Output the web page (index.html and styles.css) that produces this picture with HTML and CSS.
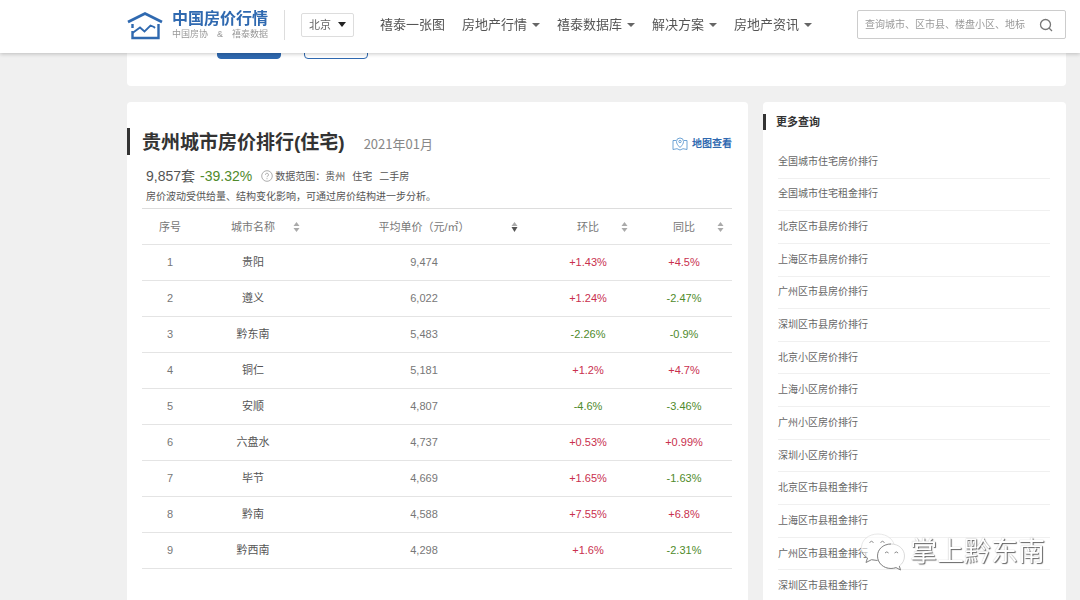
FILE: index.html
```html
<!DOCTYPE html>
<html lang="zh-CN">
<head>
<meta charset="utf-8">
<meta name="viewport" content="width=device-width, initial-scale=1">
<title>贵州城市房价排行(住宅)</title>
<link rel="stylesheet" href="styles.css">
</head>
<body>
<header class="topbar">
  <a class="brand" href="#">
    <svg class="brand-mark" viewBox="0 0 36 30" width="36" height="30" fill="none" stroke="#2f69b0">
      <path d="M1 12 18 3.500 35 12" stroke-width="2.800"/>
      <path d="M5.500 14v4M5.500 21v7H31.500V14" stroke-width="2.400"/>
      <path d="M5.500 23 13 17.500 17.500 21.500 23.500 15.500 27 17 28 18" stroke-width="1.800"/>
    </svg>
    <span class="brand-text">
      <strong class="brand-name">中国房价行情</strong>
      <span class="brand-sub"><span>中国房协</span><span>&amp;</span><span>禧泰数据</span></span>
    </span>
  </a>
  <div class="city">
    <select class="city-select" aria-label="城市"><option>北京</option></select>
    <svg class="city-caret" viewBox="0 0 8 5" width="8" height="5"><path d="M0 0h8L4 5z" fill="#222"/></svg>
  </div>
  <nav class="nav">
    <a href="#">禧泰一张图</a>
    <a class="has-menu" href="#">房地产行情</a>
    <a class="has-menu" href="#">禧泰数据库</a>
    <a class="has-menu" href="#">解决方案</a>
    <a class="has-menu" href="#">房地产资讯</a>
  </nav>
  <form class="search">
    <input class="search-input" type="text" aria-label="搜索" placeholder="查询城市、区市县、楼盘小区、地标">
    <button class="search-button" type="button" aria-label="搜索">
      <svg viewBox="0 0 14 14" width="14" height="14" fill="none" stroke="#777" stroke-width="1.300"><circle cx="6.500" cy="6.500" r="5"/><path d="M10 10l3 3"/></svg>
    </button>
  </form>
</header>

<main class="page">
  <section class="card filters">
    <button class="filter-button primary" type="button" aria-label="查询"></button>
    <button class="filter-button" type="button" aria-label="重置"></button>
  </section>

  <div class="columns">
    <section class="card ranking">
      <div class="ranking-head">
        <h1 class="ranking-title">贵州城市房价排行(住宅)</h1>
        <span class="ranking-date">2021年01月</span>
        <a class="map-link" href="#">
          <svg viewBox="0 0 16 14" width="16" height="14" fill="none" stroke="#5f9ad0" stroke-width=".9"><path d="M4 3.500H1v9l4-.800 3 1.300 3-1.300 4 .800v-9h-3"/><path d="M8 10.500C5.500 8 4.500 6.500 4.500 4.500a3.500 3.500 0 0 1 7 0C11.500 6.500 10.500 8 8 10.500z"/><circle cx="8" cy="4.500" r="1.200"/></svg>
          <span>地图查看</span>
        </a>
      </div>
      <div class="summary">
        <span class="count">9,857套</span>
        <span class="change">-39.32%</span>
        <svg class="help" viewBox="0 0 12 12" width="12" height="12" fill="none" stroke="#999" stroke-width=".8"><circle cx="6" cy="6" r="5.300"/><path d="M4.500 4.800a1.500 1.500 0 1 1 2.300 1.200Q6 6.400 6 7.200M6 8.200v1"/></svg>
        <span class="scope">数据范围：</span>
        <span class="scope-item">贵州</span>
        <span class="scope-item">住宅</span>
        <span class="scope-item">二手房</span>
      </div>
      <p class="note">房价波动受供给量、结构变化影响，可通过房价结构进一步分析。</p>
      <table class="table">
        <colgroup><col class="c-no"><col class="c-name"><col class="c-price"><col class="c-rate"><col class="c-rate"></colgroup>
        <thead>
          <tr>
            <th>序号</th>
            <th><button class="sort" type="button"><span>城市名称</span><svg viewBox="0 0 7 10" width="7" height="10"><path d="M3.500 0 6.500 4H.500z" fill="#aaa"/><path d="M3.500 10 .500 6h6z" fill="#aaa"/></svg></button></th>
            <th><button class="sort wide" type="button"><span>平均单价（元/㎡）</span><svg viewBox="0 0 7 10" width="7" height="10"><path d="M3.500 0 6.500 4H.500z" fill="#aaa"/><path d="M3.500 10 .500 5h6z" fill="#555"/></svg></button></th>
            <th><button class="sort" type="button"><span>环比</span><svg viewBox="0 0 7 10" width="7" height="10"><path d="M3.500 0 6.500 4H.500z" fill="#aaa"/><path d="M3.500 10 .500 6h6z" fill="#aaa"/></svg></button></th>
            <th><button class="sort" type="button"><span>同比</span><svg viewBox="0 0 7 10" width="7" height="10"><path d="M3.500 0 6.500 4H.500z" fill="#aaa"/><path d="M3.500 10 .500 6h6z" fill="#aaa"/></svg></button></th>
          </tr>
        </thead>
        <tbody>
          <tr><td>1</td><td class="name">贵阳</td><td>9,474</td><td class="up">+1.43%</td><td class="up">+4.5%</td></tr>
          <tr><td>2</td><td class="name">遵义</td><td>6,022</td><td class="up">+1.24%</td><td class="down">-2.47%</td></tr>
          <tr><td>3</td><td class="name">黔东南</td><td>5,483</td><td class="down">-2.26%</td><td class="down">-0.9%</td></tr>
          <tr><td>4</td><td class="name">铜仁</td><td>5,181</td><td class="up">+1.2%</td><td class="up">+4.7%</td></tr>
          <tr><td>5</td><td class="name">安顺</td><td>4,807</td><td class="down">-4.6%</td><td class="down">-3.46%</td></tr>
          <tr><td>6</td><td class="name">六盘水</td><td>4,737</td><td class="up">+0.53%</td><td class="up">+0.99%</td></tr>
          <tr><td>7</td><td class="name">毕节</td><td>4,669</td><td class="up">+1.65%</td><td class="down">-1.63%</td></tr>
          <tr><td>8</td><td class="name">黔南</td><td>4,588</td><td class="up">+7.55%</td><td class="up">+6.8%</td></tr>
          <tr><td>9</td><td class="name">黔西南</td><td>4,298</td><td class="up">+1.6%</td><td class="down">-2.31%</td></tr>
        </tbody>
      </table>
    </section>

    <aside class="card more">
      <h2 class="more-title">更多查询</h2>
      <ul class="more-list">
        <li><a href="#">全国城市住宅房价排行</a></li>
        <li><a href="#">全国城市住宅租金排行</a></li>
        <li><a href="#">北京区市县房价排行</a></li>
        <li><a href="#">上海区市县房价排行</a></li>
        <li><a href="#">广州区市县房价排行</a></li>
        <li><a href="#">深圳区市县房价排行</a></li>
        <li><a href="#">北京小区房价排行</a></li>
        <li><a href="#">上海小区房价排行</a></li>
        <li><a href="#">广州小区房价排行</a></li>
        <li><a href="#">深圳小区房价排行</a></li>
        <li><a href="#">北京区市县租金排行</a></li>
        <li><a href="#">上海区市县租金排行</a></li>
        <li><a href="#">广州区市县租金排行</a></li>
        <li><a href="#">深圳区市县租金排行</a></li>
      </ul>
    </aside>
  </div>
</main>

<div class="watermark">
  <svg viewBox="0 0 46 38" width="46" height="38">
    <g fill="#fff" stroke-linejoin="round">
      <path d="M18 1C8.500 1 1.500 7 1.500 14.500c0 4.500 2.300 8 6 10.500L6 29.500l5.500-2.800c2 .600 4.300.800 6.500.800 9.500 0 16.500-5.500 16.500-13S27.500 1 18 1z" fill-opacity=".6" stroke="#ddd" stroke-width=".7"/>
      <path d="M2 19c1 2.700 3 4.500 5.500 6L6 29.500l5.500-2.800 6 .800" fill="none" stroke="#888"/>
      <path d="M31 11c-7.500 0-13.500 5-13.500 12S23.500 35.500 31 35.500c1.800 0 3.500-.300 5-.900l4.500 2.400-1.200-4c3.200-2.200 5.200-5.800 5.200-10C44.500 16 38.500 11 31 11z" stroke="#ccc" stroke-width=".7"/>
      <path d="M31 11c-7.500 0-13.500 5-13.500 12S23.500 35.500 31 35.500c1.800 0 3.500-.300 5-.900l4.500 2.400-1.200-4" fill="none" stroke="#888"/>
    </g>
    <g fill="none" stroke="#888"><path d="M9.500 9.500q2-2.500 4 0M20.500 9.500q2-2.500 4 0M25 20q1.800-2.300 3.600 0M34.500 20q1.800-2.300 3.600 0"/></g>
  </svg>
  <span>掌上黔东南</span>
</div>
</body>
</html>
```
FILE: styles.css
```css
* { box-sizing: border-box; }
body {
  margin: 0;
  min-height: 100vh;
  overflow: hidden;
  background: #f0f0f0;
  color: #666;
  font: 11px/16px "Liberation Sans", "Noto Sans CJK SC", sans-serif;
}
a { color: inherit; text-decoration: none; }
button, input, select { font: inherit; color: inherit; }

.topbar {
  position: fixed;
  inset: 0 0 auto;
  z-index: 2;
  display: flex;
  align-items: center;
  height: 53px;
  padding: 0 14px 4px 127px;
  background: #fff;
  box-shadow: 0 1px 4px rgba(0, 0, 0, .22);
}
.brand {
  display: flex;
  align-items: center;
  gap: 9px;
  padding-right: 16px;
  border-right: 1px solid #ddd;
}
.brand-text { display: flex; flex-direction: column; width: 96px; }
.brand-name { color: #2f69b0; font-size: 16px; line-height: 18px; }
.brand-sub {
  display: flex;
  justify-content: space-between;
  color: #999;
  font-size: 9px;
  line-height: 12px;
}
.city { display: grid; align-items: center; margin: 0 26px 0 16px; }
.city-select {
  grid-area: 1 / 1;
  width: 53px;
  height: 24px;
  padding: 0 7px;
  border: 1px solid #ddd;
  border-radius: 2px;
  background: #fff;
  appearance: none;
}
.city-caret { grid-area: 1 / 1; justify-self: end; margin-right: 8px; pointer-events: none; }
.nav { display: flex; gap: 17px; color: #555; font-size: 13px; white-space: nowrap; }
.nav a { display: flex; align-items: center; gap: 5px; }
.has-menu::after {
  content: "";
  border: 4px solid transparent;
  border-top-color: #666;
  border-bottom: 0;
}
.search {
  display: flex;
  width: 209px;
  height: 29px;
  margin-left: auto;
  border: 1px solid #ccc;
  border-radius: 2px;
}
.search-input { flex: 1; min-width: 0; padding: 0 0 0 7px; border: 0; background: none; font-size: 10px; outline: 0; }
.search-input::placeholder { color: #999; opacity: 1; }
.search-button { display: grid; place-items: center; width: 39px; padding: 0; border: 0; background: none; }

.page { padding: 0 14px 0 127px; }
.card { background: #fff; border-radius: 4px; }
.filters { display: flex; gap: 23px; padding: 29px 90px 27px; }
.filter-button { width: 64px; height: 30px; border: 1px solid #2f69b0; border-radius: 4px; background: #fff; }
.primary { background: #2f69b0; }
.columns { display: grid; grid-template-columns: minmax(0, 621fr) minmax(0, 303fr); gap: 15px; margin-top: 16px; }

.ranking { padding: 26px 16px 40px 0; }
.ranking-head {
  display: flex;
  align-items: center;
  height: 27px;
  padding-left: 12px;
  border-left: 3px solid #333;
}
.ranking-title { margin: 0; padding-top: 2px; color: #333; font-size: 19px; line-height: 27px; }
.ranking-date { margin-left: 19px; padding-top: 4px; color: #888; font: 13px/20px "Noto Sans CJK SC", sans-serif; }
.map-link { display: flex; align-items: center; gap: 4px; margin-left: auto; padding-top: 4px; color: #2f69b0; font-size: 10px; font-weight: bold; }
.summary { display: flex; align-items: center; height: 20px; margin: 11px 0 0 19px; font-size: 10px; color: #555; }
.count { font-size: 14px; }
.change { margin-left: 5px; color: #4f8a2c; font-size: 14px; }
.help { margin: 0 2px 0 9px; }
.scope, .scope-item { padding-top: 2px; }
.scope-item { margin-right: 7px; }
.note { margin: 3px 0 3px 19px; color: #555; font-size: 10px; line-height: 16px; }
.table { width: calc(100% - 15px); margin-left: 15px; border-collapse: collapse; table-layout: fixed; border-top: 1px solid #ddd; }
.c-no { width: 56px; }
.c-name { width: 110px; }
.c-rate { width: 96px; }
.table th, .table td { height: 36px; padding: 0; border-bottom: 1px solid #e4e4e4; text-align: center; font-weight: normal; color: #777; }
.table td { padding-bottom: 1px; }
.table .name { color: #555; }
.table .up { color: #c9304e; }
.table .down { color: #4f8a2c; }
.sort {
  display: grid;
  grid-template-columns: 1fr auto 1fr;
  align-items: center;
  width: 100%;
  padding: 0 8px;
  border: 0;
  background: none;
  white-space: nowrap;
}
.sort span { grid-column: 2; }
.sort svg { justify-self: end; }
.wide { padding: 0 22px; }

.more { padding: 12px 16px 0 0; }
.more-title { margin: 0; padding-left: 10px; border-left: 3px solid #333; color: #333; font-size: 11px; line-height: 16px; }
.more-list { display: grid; grid-auto-rows: 1fr; height: 457px; margin: 16px 0 0 15px; padding: 0; list-style: none; }
.more-list li { display: flex; align-items: center; border-bottom: 1px solid #f0f0f0; font-size: 10px; }

.watermark {
  position: fixed;
  right: 35px;
  bottom: 29px;
  z-index: 3;
  display: flex;
  align-items: center;
  gap: 4px;
  color: #fff;
  font-size: 27px;
  line-height: 38px;
  text-shadow: 1px 1px 1px #666, 0 0 1px #aaa;
}
```
